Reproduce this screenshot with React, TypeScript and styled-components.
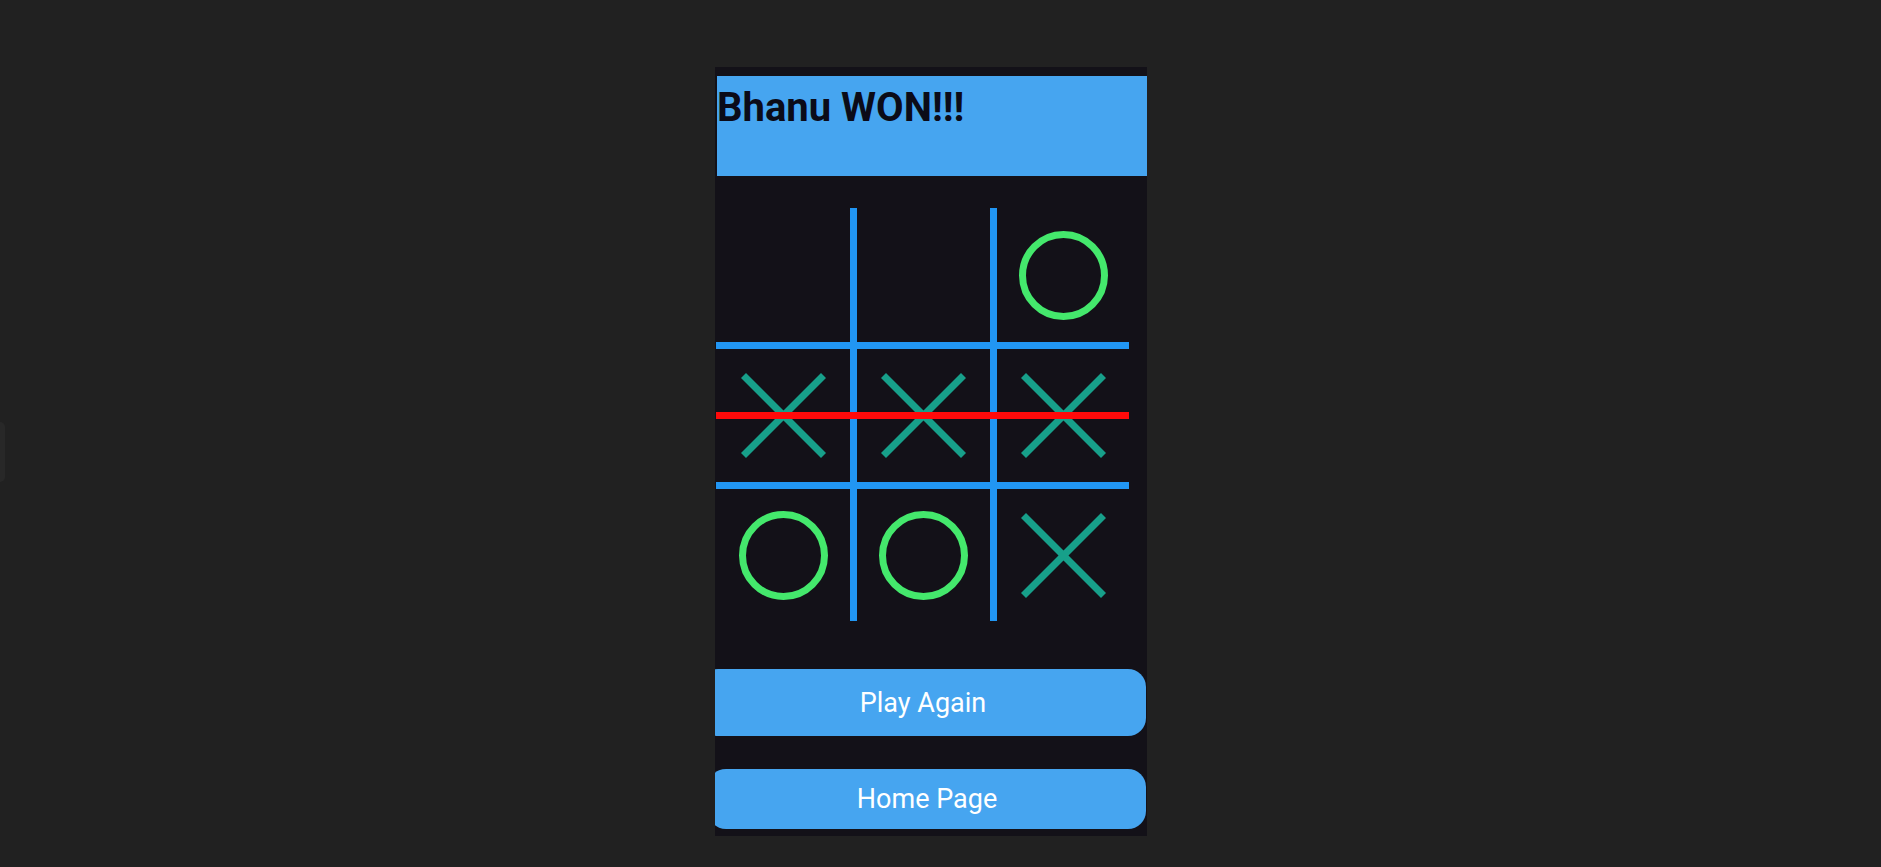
import React from "react";
import styled, { createGlobalStyle } from "styled-components";

const GlobalStyle = createGlobalStyle`
  html, body {
    margin: 0;
    padding: 0;
    background: #212121;
    font-family: Roboto, "Noto Sans", Arial, sans-serif;
  }
  * { box-sizing: border-box; }
`;

const Page = styled.div`
  position: relative;
  min-height: 867px;
  display: flex;
  justify-content: center;
  padding-top: 67px;
  padding-right: 19px;
`;

const SideTab = styled.div`
  position: absolute;
  left: 0;
  top: 422px;
  width: 5px;
  height: 60px;
  background: #282828;
  border-radius: 0 6px 6px 0;
`;

const Phone = styled.div`
  position: relative;
  width: 432px;
  height: 769px;
  background: #131118;
  overflow: hidden;
  display: flex;
  flex-direction: column;
`;

const Header = styled.div`
  margin: 9px 0 0 2px;
  height: 100px;
  background: #46a5f0;
  padding-top: 8px;
`;

const Title = styled.h1`
  margin: 0;
  font-family: Roboto, "Noto Sans", sans-serif;
  font-weight: 700;
  font-size: 40px;
  line-height: 47px;
  color: #0b0b18;
`;

const BoardWrap = styled.div`
  position: relative;
  margin: 32px 0 0 1px;
  width: 413px;
`;

const Board = styled.div`
  display: grid;
  grid-template-columns: 134px 133px 132px;
  grid-template-rows: 134px 133px 132px;
  gap: 7px;
  background: #2196f3;
`;

const Cell = styled.div`
  background: #131118;
  display: flex;
  align-items: center;
  justify-content: center;
`;

const WinLine = styled.div`
  position: absolute;
  left: 0;
  right: 0;
  top: 204px;
  height: 7px;
  background: #ff0a0a;
`;

const ButtonRow = styled.div<{ $top: number; $h: number }>`
  margin-top: ${(p) => p.$top}px;
  height: ${(p) => p.$h}px;
  display: flex;
`;

const ActionButton = styled.button<{ $shift: number }>`
  flex: none;
  width: ${(p) => 431 + p.$shift}px;
  margin-left: ${(p) => -p.$shift}px;
  height: 100%;
  border: none;
  background: #46a5f0;
  color: #ffffff;
  font-family: Roboto, "Noto Sans", sans-serif;
  font-size: 27px;
  font-weight: 400;
  border-radius: 18px;
  padding: 0;
  cursor: pointer;
`;

const O = () => (
  <svg width="89" height="89" viewBox="0 0 89 89">
    <circle cx="44.5" cy="44.5" r="41" fill="none" stroke="#44e86c" strokeWidth="7" />
  </svg>
);

const X = () => (
  <svg width="85" height="85" viewBox="0 0 85 85">
    <line x1="2.5" y1="2.5" x2="82.5" y2="82.5" stroke="#17a08a" strokeWidth="7" />
    <line x1="82.5" y1="2.5" x2="2.5" y2="82.5" stroke="#17a08a" strokeWidth="7" />
  </svg>
);

const cells: ("X" | "O" | "")[] = ["", "", "O", "X", "X", "X", "O", "O", "X"];

export default function App() {
  return (
    <>
      <GlobalStyle />
      <Page>
        <SideTab />
        <Phone>
          <Header>
            <Title>Bhanu WON!!!</Title>
          </Header>
          <BoardWrap>
            <Board>
              {cells.map((c, i) => (
                <Cell key={i}>{c === "X" ? <X /> : c === "O" ? <O /> : null}</Cell>
              ))}
            </Board>
            <WinLine />
          </BoardWrap>
          <ButtonRow $top={48} $h={67}>
            <ActionButton $shift={15}>Play Again</ActionButton>
          </ButtonRow>
          <ButtonRow $top={33} $h={60}>
            <ActionButton $shift={7}>Home Page</ActionButton>
          </ButtonRow>
        </Phone>
      </Page>
    </>
  );
}
